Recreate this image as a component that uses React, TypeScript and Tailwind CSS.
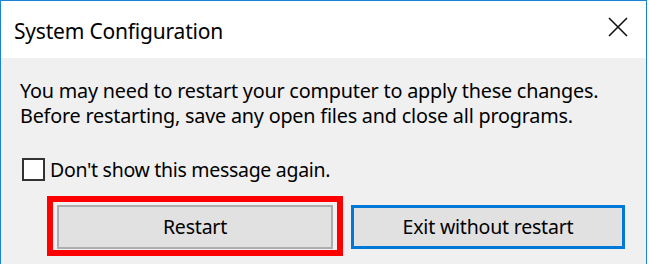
import React from "react";

export default function App() {
  const font = { fontFamily: '"Noto Sans", "Open Sans", sans-serif' };
  return (
    <div className="w-[649px] h-[264px] bg-white overflow-hidden text-black" style={font}>
      <div className="w-[647px] h-[264px] border-l border-t border-r border-[#1883d7] flex flex-col">
        <div className="h-[57px] bg-white flex items-start justify-between pl-[13px] pr-[17px] pt-[17px]">
          <span className="text-[21px] leading-[27px] tracking-[-0.2px]">System Configuration</span>
          <svg width="22" height="22" viewBox="0 0 22 22" className="mt-[-2px]">
            <path d="M2 2 L20 20 M20 2 L2 20" stroke="#111" strokeWidth="1.6" fill="none" />
          </svg>
        </div>
        <div className="flex-1 bg-[#f0f0f0] flex flex-col pt-[20px]">
          <div className="pl-[19px] text-[19.8px] leading-[25px] tracking-[-0.2px]">
            <div>You may need to restart your computer to apply these changes.</div>
            <div>Before restarting, save any open files and close all programs.</div>
          </div>
          <div className="flex items-center mt-[30px] pl-[21px] h-[23px]">
            <div className="w-[23px] h-[23px] border-2 border-[#333] bg-white" />
            <span className="ml-[5px] text-[19.5px] leading-[25px] tracking-[-0.3px]">Don't show this message again.</span>
          </div>
          <div className="flex items-start mt-[15px] pl-[46px]">
            <div className="border-[6px] border-[#ff0000] pt-[3px] pb-[1px] px-[4px]">
              <div className="w-[276px] h-[44px] border-2 border-[#adadad] bg-[#e1e1e1] flex items-center justify-center text-[19.5px] tracking-[-0.2px]">
                Restart
              </div>
            </div>
            <div className="ml-[8px] mt-[9px] w-[274px] h-[44px] border-[3px] border-[#0078d7] bg-[#e1e1e1] flex items-center justify-center text-[19.5px] tracking-[-0.2px]">
              Exit without restart
            </div>
          </div>
        </div>
      </div>
    </div>
  );
}
